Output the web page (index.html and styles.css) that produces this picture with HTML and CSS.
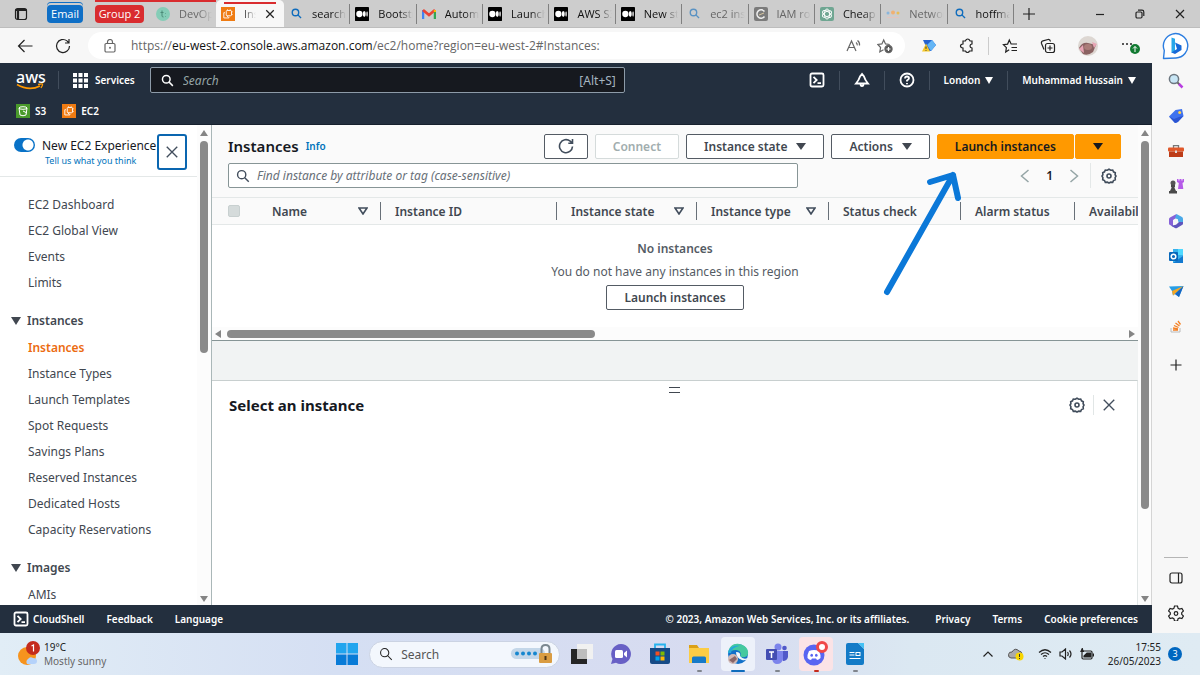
FILE: index.html
```html
<!DOCTYPE html>
<html lang="en">
<head>
    <meta charset="UTF-8">
    <meta name="viewport" content="width=device-width, initial-scale=1.0">
    <title>Instances | EC2 Management Console</title>
    <link rel="stylesheet" href="styles.css">
</head>
<body>
    <!-- Shared icons -->
    <svg class="sprite" aria-hidden="true">
        <symbol id="i-search" viewBox="0 0 16 16"><circle cx="6.5" cy="6.5" r="4.7"/><path d="M10 10l4.6 4.6"/></symbol>
        <symbol id="i-close" viewBox="0 0 16 16"><path d="M2 2l12 12M14 2L2 14"/></symbol>
        <symbol id="i-gear" viewBox="0 0 16 16"><path d="M8 1.2l1.700 1 2-.2.8 1.800 1.800.9-.2 2L15 8l-.9 1.700.2 2-1.800.8-.8 1.800-2-.2L8 15l-1.700-.9-2 .2-.8-1.800-1.800-.8.2-2L1 8l.9-1.300-.2-2 1.800-.9.8-1.800 2 .2z"/><circle cx="8" cy="8" r="2"/></symbol>
        <symbol id="i-shell" viewBox="0 0 16 16"><rect x="1.5" y="1.5" width="13" height="13" rx="1.5"/><path d="M4.5 4.800L7.700 8l-3.200 3.200M8.500 11.200H12"/></symbol>
        <symbol id="i-medium" viewBox="0 0 16 16"><rect width="16" height="16" rx="1" fill="#000"/><g fill="#fff"><circle cx="5" cy="8" r="3.600"/><ellipse cx="10.600" cy="8" rx="1.700" ry="3.400"/><ellipse cx="13.800" cy="8" rx=".8" ry="3.100"/></g></symbol>
        <symbol id="i-ec2" viewBox="0 0 16 16"><rect width="16" height="16" fill="#ef7b12"/><g fill="none" stroke="#fff"><rect x="6" y="4" width="6" height="6" rx="1"/><path d="M4.500 6.500H3.200v6H9v-1.400M7.500 4V2.700M10.500 4V2.700M12 5.500h1.300M12 8.500h1.300M7.500 10v1.500"/></g></symbol>
    </svg>

    <div class="tab-bar">
        <button class="icon-button tab-actions" aria-label="Tab actions"><svg class="line" width="14" height="14" viewBox="0 0 14 14"><rect x="1.500" y="1.500" width="11" height="11" rx="2"/><path d="M1.500 3h11M4 4v8.500" stroke-width="2.200"/></svg></button>
        <button class="group group-email">Email</button>
        <div class="red-group">
            <button class="group group-two">Group 2</button>
            <button class="tab muted"><svg width="14" height="14" viewBox="0 0 14 14"><circle cx="7" cy="7" r="7" fill="#85cdb7"/><path d="M6 3.500v5.500q0 1 1.500 1M4.500 5.500h3M9.500 6v.5M9.500 9.500v.5" stroke="#4b8b78" fill="none"/></svg><span>DevOps</span></button>
        </div>
        <button class="tab active"><svg width="14" height="14"><use href="#i-ec2"/></svg><span>Inst</span><svg class="line dark" width="10" height="10"><use href="#i-close"/></svg></button>
        <button class="tab"><svg class="line blue" width="11" height="11"><use href="#i-search"/></svg><span>search t</span></button>
        <button class="tab"><svg width="14" height="14"><use href="#i-medium"/></svg><span>Bootstr</span></button>
        <button class="tab"><svg width="14" height="12" viewBox="0 0 14 12"><path d="M1 11V2" stroke="#4285f4" stroke-width="2.500"/><path d="M13 11V2" stroke="#34a853" stroke-width="2.500"/><path d="M1 2l6 5 6-5" fill="none" stroke="#ea4335" stroke-width="2.800"/><path d="M13 4V2" stroke="#fbbc04" stroke-width="2.500"/></svg><span>Automa</span></button>
        <button class="tab"><svg width="14" height="14"><use href="#i-medium"/></svg><span>Launch</span></button>
        <button class="tab"><svg width="14" height="14"><use href="#i-medium"/></svg><span>AWS S3</span></button>
        <button class="tab"><svg width="14" height="14"><use href="#i-medium"/></svg><span>New sto</span></button>
        <button class="tab muted"><svg class="line blue faded" width="11" height="11"><use href="#i-search"/></svg><span>ec2 inst</span></button>
        <button class="tab muted"><svg width="14" height="14" viewBox="0 0 14 14"><rect width="14" height="14" rx="2" fill="#7b7b7b"/><path d="M10.500 4.500a4.200 4.200 0 1 0 0 5" fill="none" stroke="#eee" stroke-width="1.500"/><path d="M5 8l5-2" stroke="#d8c6a0"/></svg><span>IAM rol</span></button>
        <button class="tab"><svg width="14" height="14" viewBox="0 0 14 14"><rect width="14" height="14" rx="2" fill="#6fa692"/><g fill="none" stroke="#fff" stroke-width=".9"><ellipse cx="7" cy="7" rx="2.500" ry="5"/><ellipse cx="7" cy="7" rx="2.500" ry="5" transform="rotate(60 7 7)"/><ellipse cx="7" cy="7" rx="2.500" ry="5" transform="rotate(120 7 7)"/></g></svg><span>Cheap A</span></button>
        <button class="tab muted"><svg width="14" height="12" viewBox="0 0 14 12"><circle cx="2" cy="5" r="1.500" fill="#8ab6dd"/><circle cx="7" cy="4.500" r="2" fill="#f0b072"/><circle cx="12" cy="5" r="1.500" fill="#e9bd55"/><path d="M1 9.500h12" stroke="#e3c4bd"/></svg><span>Networ</span></button>
        <button class="tab"><svg class="line blue" width="11" height="11"><use href="#i-search"/></svg><span>hoffma</span></button>
        <button class="icon-button new-tab" aria-label="New tab"><svg class="line" width="14" height="14" viewBox="0 0 14 14"><path d="M7 1v12M1 7h12"/></svg></button>
        <div class="window-buttons">
            <button class="icon-button" aria-label="Minimise"><svg class="line" width="10" height="10" viewBox="0 0 10 10"><path d="M1 5.500h8"/></svg></button>
            <button class="icon-button" aria-label="Restore"><svg class="line" width="10" height="10" viewBox="0 0 10 10"><rect x="1" y="3" width="6" height="6" rx="1.200"/><path d="M3 1.200h4q1.800 0 1.800 1.800v4"/></svg></button>
            <button class="icon-button" aria-label="Close window"><svg class="line" width="10" height="10" viewBox="0 0 10 10"><path d="M1 1l8 8M9 1L1 9"/></svg></button>
        </div>
    </div>

    <div class="toolbar">
        <button class="icon-button" aria-label="Back"><svg class="line" width="16" height="14" viewBox="0 0 16 14"><path d="M15.500 7H1.500M7.500 1L1.500 7l6 6"/></svg></button>
        <button class="icon-button refresh" aria-label="Refresh"><svg class="line" width="16" height="16" viewBox="0 0 16 16"><path d="M14.500 8a6.500 6.500 0 1 1-2.500-5.100L14 5M14 1v4h-4"/></svg></button>
        <div class="address">
            <svg class="line grey" width="12" height="14" viewBox="0 0 12 14"><rect x="1" y="4.500" width="10" height="8.500" rx="1.200"/><path d="M3.500 4.500V3a2.500 2.500 0 0 1 5 0v1.500"/><circle cx="6" cy="8.700" r=".4"/></svg>
            <div class="url" role="textbox" aria-label="Address" contenteditable="true" spellcheck="false">https://<b>eu-west-2.console.aws.amazon.com</b>/ec2/home?region=eu-west-2#Instances:</div>
            <svg class="line grey" width="16" height="14" viewBox="0 0 16 14"><path d="M1 12L5.500 2 10 12M2.600 8.500h5.800M10 3.500q1.500 1 1.200 2.800M11.500 1.500q2.500 1.800 2 5"/></svg>
            <svg class="line grey" width="16" height="16" viewBox="0 0 16 16"><path d="M6.500 11.800l-3.700 2 .8-4.300L.8 6.500l4.100-.6L6.700 2l1.800 3.900 4.200.6"/><circle cx="11.500" cy="11" r="3.600" fill="#555"/><path d="M11.500 9v4M9.500 11h4" stroke="#fff"/></svg>
        </div>
        <div class="toolbar-icons">
            <svg width="16" height="14" viewBox="0 0 16 14"><path d="M2 1h9l4 5-5 6H7z" fill="#2463d1"/><path d="M6 6l5-5 4 5-5 6z" fill="#64b5f5"/><path d="M5 4.500L9 12.500H1z" fill="#f7c928"/><path d="M5 7.500v2.300M5 11v.7" stroke="#333"/></svg>
            <svg class="line" width="16" height="16" viewBox="0 0 16 16"><path d="M4 3h2.300q.9-2 2.400-2t2.400 2H13v3q-2 .3-2 2t2 2v3h-2.500q-.6 1.500-2 1.500T6.500 13H4v-3q-2.500-.2-2.500-2T4 6z"/></svg>
            <i class="divider"></i>
            <svg class="line" width="16" height="16" viewBox="0 0 16 16"><path d="M7.200 11.700L3.700 14l.7-4.300-3-3 4.200-.6L7.300 2l1.800 4H15M9.500 9.500H15M9.500 12.500H15"/></svg>
            <svg class="line" width="16" height="16" viewBox="0 0 16 16"><rect x="5.500" y="5.500" width="9" height="9" rx="2"/><path d="M4 11.500L1.500 5.500Q1 3.500 3 2.800L8 1.500q2-.4 2.500 2M10 7.500v5M7.500 10h5"/></svg>
            <svg width="20" height="20" viewBox="0 0 20 20"><circle cx="10" cy="10" r="10" fill="#ddd7d2"/><path d="M1 12q3-6 9-5l8 2-3 7q-5 4-10 2z" fill="#8a6262"/><path d="M1 13l4-4 1 8zM14 6l5 2-3 4z" fill="#e8a5b5"/><ellipse cx="10" cy="11" rx="4" ry="3" fill="#aa7c78"/></svg>
            <button class="icon-button" aria-label="Settings and more"><svg width="20" height="16" viewBox="0 0 20 16"><g fill="#222"><circle cx="3" cy="6" r="1"/><circle cx="7" cy="6" r="1"/><circle cx="11" cy="6" r="1"/></g><circle cx="15" cy="11" r="5" fill="#117a31"/><path d="M15 14V8.500M13 10.500l2-2 2 2" stroke="#fff" fill="none"/></svg></button>
            <svg width="28" height="28" viewBox="0 0 28 28"><path d="M1.500 26.500l.8-8A12.200 12.200 0 1 1 14 26z" fill="#fff" stroke="#2b7de0" stroke-width="1.400" stroke-linejoin="round"/><path d="M9.500 5.500l3.500 1.200v12.800L9.500 21z" fill="#28a8ea"/><path d="M13 10.500l6.500 3v4.500L13 22l-3.500-1.500 5.500-3.500z" fill="#1769d8"/></svg>
        </div>
    </div>

    <div class="workspace">
        <div class="console">
            <header class="aws-header">
                <div class="aws-top">
                    <a class="aws-logo" href="#" aria-label="aws home">
                        <span>aws</span>
                        <svg width="28" height="7" viewBox="0 0 28 7"><path d="M1 1.500q12 7 23 1.500" fill="none" stroke="#f90" stroke-width="1.600"/><path d="M22 1.500q4-1 4.500-.5T25 5" fill="none" stroke="#f90" stroke-width="1.300"/></svg>
                    </a>
                    <i class="divider"></i>
                    <button class="nav-button services"><svg width="15" height="15" viewBox="0 0 15 15" fill="#fff"><path d="M0 0h4v4H0zM5.500 0h4v4h-4zM11 0h4v4h-4zM0 5.500h4v4H0zM5.500 5.500h4v4h-4zM11 5.500h4v4h-4zM0 11h4v4H0zM5.500 11h4v4h-4zM11 11h4v4h-4z"/></svg>Services</button>
                    <label class="aws-search">
                        <svg class="line white" width="13" height="13"><use href="#i-search"/></svg>
                        <input type="search" placeholder="Search" aria-label="Search services">
                        <span>[Alt+S]</span>
                    </label>
                    <div class="aws-right">
                        <button class="nav-button" aria-label="CloudShell"><svg class="line white" width="16" height="16"><use href="#i-shell"/></svg></button>
                        <button class="nav-button" aria-label="Notifications"><svg class="line white" width="16" height="16" viewBox="0 0 16 16"><path d="M8 2L6 4.500Q5 8 2 11.500h12Q11 8 10 4.500zM6.500 12q0 2 1.500 2t1.500-2"/></svg></button>
                        <button class="nav-button" aria-label="Help"><svg class="line white" width="16" height="16" viewBox="0 0 16 16"><circle cx="8" cy="8" r="6.500"/><path d="M6 6.500q0-2 2-2t2 1.800q0 1-2 2.200V9.500M8 11v1.200"/></svg></button>
                        <button class="nav-button">London<i class="caret"></i></button>
                        <button class="nav-button account">Muhammad Hussain<i class="caret"></i></button>
                    </div>
                </div>
                <nav class="favourites">
                    <a href="#"><svg width="14" height="14" viewBox="0 0 14 14"><rect width="14" height="14" fill="#4a9a2c"/><g fill="none" stroke="#fff"><ellipse cx="7" cy="4" rx="4" ry="1.300"/><path d="M3 4l1 7q3 1.500 6 0l1-7M7 7l4 2"/></g></svg>S3</a>
                    <a href="#"><svg width="14" height="14"><use href="#i-ec2"/></svg>EC2</a>
                </nav>
            </header>

            <div class="console-body">
                <aside class="side-nav">
                    <div class="side-content">
                        <div class="experience">
                            <input type="checkbox" id="newExperience" checked>
                            <div>
                                <label for="newExperience">New EC2 Experience</label>
                                <a href="#">Tell us what you think</a>
                            </div>
                            <button aria-label="Close navigation"><svg class="line slate" width="14" height="14"><use href="#i-close"/></svg></button>
                        </div>
                        <nav class="links">
                            <ul>
                                <li><a href="#">EC2 Dashboard</a></li>
                                <li><a href="#">EC2 Global View</a></li>
                                <li><a href="#">Events</a></li>
                                <li><a href="#">Limits</a></li>
                            </ul>
                            <h3><i class="caret"></i>Instances</h3>
                            <ul>
                                <li><a class="current" href="#">Instances</a></li>
                                <li><a href="#">Instance Types</a></li>
                                <li><a href="#">Launch Templates</a></li>
                                <li><a href="#">Spot Requests</a></li>
                                <li><a href="#">Savings Plans</a></li>
                                <li><a href="#">Reserved Instances</a></li>
                                <li><a href="#">Dedicated Hosts</a></li>
                                <li><a href="#">Capacity Reservations</a></li>
                            </ul>
                            <h3><i class="caret"></i>Images</h3>
                            <ul>
                                <li><a href="#">AMIs</a></li>
                            </ul>
                        </nav>
                    </div>
                    <div class="scrollbar side-scroll"><i class="up"></i><i class="thumb"></i><i class="down"></i></div>
                </aside>

                <main class="content">
                    <section class="instances">
                        <div class="panel-head">
                            <div class="title-row">
                                <h1>Instances</h1>
                                <a href="#">Info</a>
                                <div class="actions">
                                    <button class="btn" aria-label="Refresh instances"><svg class="line slate" width="16" height="16" viewBox="0 0 16 16"><path d="M14.500 8.500a6.500 6.500 0 1 1-2.300-5.300L14.300 5M14.500 1v4.200h-4.200"/></svg></button>
                                    <button class="btn" disabled>Connect</button>
                                    <button class="btn">Instance state<i class="caret"></i></button>
                                    <button class="btn">Actions<i class="caret"></i></button>
                                    <div class="split">
                                        <button class="btn primary">Launch instances</button>
                                        <button class="btn primary" aria-label="More launch options"><i class="caret"></i></button>
                                    </div>
                                </div>
                            </div>
                            <div class="filter-row">
                                <label class="filter">
                                    <svg class="line slate" width="14" height="14"><use href="#i-search"/></svg>
                                    <input type="search" placeholder="Find instance by attribute or tag (case-sensitive)" aria-label="Find instance">
                                </label>
                                <div class="pager">
                                    <button class="icon-button" aria-label="Previous page"><svg class="line pale" width="10" height="14" viewBox="0 0 10 14"><path d="M8.500 1L1.500 7l7 6"/></svg></button>
                                    <span>1</span>
                                    <button class="icon-button" aria-label="Next page"><svg class="line pale" width="10" height="14" viewBox="0 0 10 14"><path d="M1.500 1l7 6-7 6"/></svg></button>
                                    <button class="icon-button preferences" aria-label="Preferences"><svg class="line slate" width="16" height="16"><use href="#i-gear"/></svg></button>
                                </div>
                            </div>
                        </div>
                        <table>
                            <colgroup><col class="c-check"><col class="c-name"><col class="c-id"><col class="c-state"><col class="c-type"><col class="c-status"><col class="c-alarm"><col class="c-zone"></colgroup>
                            <thead>
                                <tr>
                                    <th><input type="checkbox" aria-label="Select all instances" disabled></th>
                                    <th><div>Name<svg class="line slate" width="10" height="8" viewBox="0 0 10 8"><path d="M1 1h8L5 7z"/></svg></div></th>
                                    <th><div>Instance ID</div></th>
                                    <th><div>Instance state<svg class="line slate" width="10" height="8" viewBox="0 0 10 8"><path d="M1 1h8L5 7z"/></svg></div></th>
                                    <th><div>Instance type<svg class="line slate" width="10" height="8" viewBox="0 0 10 8"><path d="M1 1h8L5 7z"/></svg></div></th>
                                    <th><div>Status check</div></th>
                                    <th><div>Alarm status</div></th>
                                    <th><div>Availability Zone</div></th>
                                </tr>
                            </thead>
                        </table>
                        <div class="empty">
                            <strong>No instances</strong>
                            <p>You do not have any instances in this region</p>
                            <button class="btn">Launch instances</button>
                        </div>
                        <div class="scrollbar horizontal"><i class="left"></i><i class="thumb"></i><i class="right"></i></div>
                    </section>
                    <section class="details">
                        <button class="grip" aria-label="Resize panel"></button>
                        <div class="details-head">
                            <h2>Select an instance</h2>
                            <button class="icon-button" aria-label="Panel preferences"><svg class="line slate" width="16" height="16"><use href="#i-gear"/></svg></button>
                            <button class="icon-button close" aria-label="Close panel"><svg class="line slate" width="14" height="14"><use href="#i-close"/></svg></button>
                        </div>
                    </section>
                    <!-- Pointer to the launch button -->
                    <svg class="pointer" width="80" height="128" viewBox="0 0 80 128"><path d="M5 122L71 5M48 12L71 5l5 23" fill="none" stroke="#0b78d8" stroke-width="6" stroke-linecap="round" stroke-linejoin="round"/></svg>
                </main>
                <div class="scrollbar page-scroll"><i class="up"></i><i class="thumb"></i><i class="down"></i></div>
            </div>

            <footer class="aws-footer">
                <button class="nav-button"><svg class="line white" width="16" height="16"><use href="#i-shell"/></svg>CloudShell</button>
                <a href="#">Feedback</a>
                <a href="#">Language</a>
                <span class="copyright">© 2023, Amazon Web Services, Inc. or its affiliates.</span>
                <a href="#">Privacy</a>
                <a href="#">Terms</a>
                <a href="#">Cookie preferences</a>
            </footer>
        </div>

        <aside class="edge-bar">
            <button class="icon-button" aria-label="Search"><svg width="16" height="16" viewBox="0 0 16 16"><circle cx="6" cy="6" r="4.600" fill="#c8e6f5" stroke="#6d7780" stroke-width="1.500"/><path d="M9.500 9.500l2 2" stroke="#666" stroke-width="2"/><path d="M11 11l3.500 3.500" stroke="#b83ee0" stroke-width="2.500"/></svg></button>
            <button class="icon-button" aria-label="Shopping"><svg width="16" height="16" viewBox="0 0 16 16"><path d="M1 8.500L7.500 2l6.500-1 1.500 7-6.500 6.500-2 .5z" fill="#3f72ee"/><path d="M1 8.500L7 15l3-1 5.500-6L11 9l-5 2z" fill="#2b54d2"/><circle cx="11.700" cy="4.500" r="1.500" fill="#ffd24a"/></svg></button>
            <button class="icon-button" aria-label="Tools"><svg width="16" height="16" viewBox="0 0 16 16"><path d="M5.500 5V2.700h5V5" fill="none" stroke="#777" stroke-width="1.300"/><rect x="0" y="4.500" width="16" height="4" rx="1" fill="#e0582a"/><path d="M1 8.500h14V14H1z" fill="#bd3c18"/><path d="M7 7.500h2V10H7z" fill="#ddd"/></svg></button>
            <button class="icon-button" aria-label="Games"><svg width="16" height="16" viewBox="0 0 16 16"><path d="M9 1h1.500v1.500h1V1h2v1.500h1V1H16v3l-1.500 1 .8 6H10l.8-6L9 4z" fill="#b55be8"/><circle cx="5" cy="5" r="2.500" fill="#555"/><path d="M3 7h4v2l-.7.5L8 13h1v2.500H1V13h1l1.700-3.500L3 9z" fill="#4a4a4a"/></svg></button>
            <button class="icon-button" aria-label="Microsoft 365"><svg width="16" height="16" viewBox="0 0 16 16"><path d="M8.500 1L2 4.500Q1 5 1 6v4.500q0 1 1 1.500l3 1.500V7l4-2.500z" fill="#8662d8"/><path d="M8.500 1l5.500 3q1 .6 1 2v4l-5-1V6.500L7 5z" fill="#4aa9e8"/><path d="M15 9v1.500q0 1-1 1.500l-5 3q-1 .5-2 0l-4-2.300 5-1L11 9z" fill="#5f55bd"/><circle cx="8" cy="8.200" r="2.300" fill="#f7f7f7"/></svg></button>
            <button class="icon-button" aria-label="Outlook"><svg width="16" height="16" viewBox="0 0 16 16"><path d="M5 1h10v14H5z" fill="#37b2ed"/><path d="M10 1h5v6h-5z" fill="#50d9ff"/><path d="M5 15l10-7v7z" fill="#1379cf"/><rect x="1" y="4" width="9" height="9" rx="1" fill="#0868bb"/><circle cx="5.500" cy="8.500" r="2.300" fill="none" stroke="#fff" stroke-width="1.500"/></svg></button>
            <button class="icon-button" aria-label="Drop"><svg width="16" height="16" viewBox="0 0 16 16"><path d="M1 3.500L15.500 3 11 14l-4-3-2 1.500L4 8z" fill="#279de5"/><path d="M15.500 3L4 8l1 4.500z" fill="#f5a623"/><path d="M15.500 3L11 14l-4-3z" fill="#1765c1"/></svg></button>
            <button class="icon-button" aria-label="Stack Overflow"><svg width="14" height="14" viewBox="0 0 14 14" fill="none"><path d="M2 9v4h9V9" stroke="#bcbcbc"/><path d="M4 11h5M4 9l5 .8M5 6.500l4.500 2M6.500 4l4 3M9 2l2.500 3.500" stroke="#f48024" stroke-width="1.300"/></svg></button>
            <button class="icon-button customise" aria-label="Customise"><svg class="line" width="12" height="12" viewBox="0 0 12 12"><path d="M6 .5v11M.5 6h11"/></svg></button>
            <div class="edge-bottom">
                <button class="icon-button" aria-label="Hide sidebar"><svg class="line" width="14" height="12" viewBox="0 0 14 12"><rect x="1" y="1" width="12" height="10" rx="2"/><path d="M9.500 1v10"/></svg></button>
                <button class="icon-button" aria-label="Sidebar settings"><svg class="line" width="16" height="16" viewBox="0 0 16 16"><path d="M6.500 1h3l.6 2.300 1.500.8 2.300-.7 1.500 2.600-1.700 1.700v1.600l1.700 1.700-1.500 2.600-2.300-.7-1.500.8L9.500 16h-3l-.6-2.300-1.500-.8-2.300.7L.6 11l1.700-1.700V7.700L.6 6l1.500-2.600 2.300.7 1.500-.8z"/><circle cx="8" cy="8.500" r="1.800"/></svg></button>
            </div>
        </aside>
    </div>

    <div class="taskbar">
        <button class="weather">
            <svg width="24" height="26" viewBox="0 0 24 26"><circle cx="9" cy="15" r="9" fill="#f6931e"/><path d="M9 23a4 4 0 0 1 1-5q2-3 5-1 4 0 4 3t-3 3z" fill="#b5d2fa"/><circle cx="15" cy="7" r="7" fill="#c42b1c"/><path d="M13.500 5l2-1v6.500" fill="none" stroke="#fff" stroke-width="1.200"/></svg>
            <span>19°C<small>Mostly sunny</small></span>
        </button>
        <div class="task-apps">
            <button class="app" aria-label="Start"><svg width="22" height="22" viewBox="0 0 22 22"><path d="M0 0h10.500v10.500H0zM11.500 0H22v10.500H11.500z" fill="#22a5ee"/><path d="M0 11.500h10.500V22H0zM11.500 11.500H22V22H11.500z" fill="#087bd7"/></svg></button>
            <label class="task-search">
                <svg class="line" width="14" height="14"><use href="#i-search"/></svg>
                <input type="search" placeholder="Search" aria-label="Search Windows">
                <svg width="44" height="22" viewBox="0 0 44 22"><rect x="1" y="5" width="34" height="11" rx="5.500" fill="#c4d7e9"/><g fill="#1687cf"><circle cx="7" cy="10.500" r="2"/><circle cx="13" cy="10.500" r="2"/><circle cx="19" cy="10.500" r="2"/><circle cx="25" cy="10.500" r="2"/></g><path d="M31.500 11V6q0-4 4-4t4 4v5" fill="none" stroke="#7c8890" stroke-width="2"/><rect x="29" y="10" width="13" height="10" rx="1" fill="#d99c42"/><path d="M35.500 13v4" stroke="#4c3518" stroke-width="2"/></svg>
            </label>
            <button class="app" aria-label="Task view"><svg width="22" height="22" viewBox="0 0 22 22"><rect x="0" y="6" width="16" height="15" fill="#252525"/><rect x="6" y="1" width="16" height="15" fill="#f1f1f1"/><path d="M6 6h10v10H6z" fill="#bdbdbd"/></svg></button>
            <button class="app" aria-label="Chat"><svg width="22" height="22" viewBox="0 0 22 22"><path d="M11 1a10 10 0 1 1-5 18.700L1 21l1.500-5A10 10 0 0 1 11 1z" fill="#6860c5"/><rect x="5" y="7" width="8" height="8" rx="1.500" fill="#fff"/><path d="M14 10l3-2.500v7L14 12z" fill="#fff"/></svg></button>
            <button class="app" aria-label="Microsoft Store"><svg width="22" height="22" viewBox="0 0 22 22"><path d="M6 5V1.500h10V5" fill="none" stroke="#27b3ee" stroke-width="1.800"/><path d="M1 5h20v14q0 2-2 2H3q-2 0-2-2z" fill="#164a86"/><path d="M6.500 8.500h4v4h-4z" fill="#f25022"/><path d="M11.500 8.500h4v4h-4z" fill="#7fba00"/><path d="M6.500 13.500h4v4h-4z" fill="#00a4ef"/><path d="M11.500 13.500h4v4h-4z" fill="#ffb900"/></svg></button>
            <button class="app open" aria-label="File Explorer"><svg width="22" height="22" viewBox="0 0 22 22"><path d="M1 2h8l2 3h10v15H1z" fill="#dba018"/><path d="M1 5h20v15H1z" fill="#fbcc45"/><path d="M4 20v-5q0-1.500 1.500-1.500h11q1.500 0 1.500 1.500v5z" fill="#1679c8"/></svg></button>
            <button class="app open current" aria-label="Edge"><svg width="22" height="22" viewBox="0 0 22 22"><circle cx="11" cy="11" r="10" fill="#1270c9"/><path d="M1 10C2 3 7 0 12 1c6 1 10 5 9 10-1 4-6 4-8 2 2-2 0-6-4-6-4 0-7 2-8 3z" fill="#45c99f"/><path d="M1 10c1-6 7-9 13-7-5 0-9 2-10 7z" fill="#23a7dc"/><path d="M9 9q5 0 4 4 3 4 8 2-2 3-6 2-6-2-6-8z" fill="#f2f8fc"/><circle cx="6" cy="16" r="5" fill="#cfb7b4"/><path d="M2 17l6-4 2 3-4 4z" fill="#886669"/></svg></button>
            <button class="app open" aria-label="Teams"><svg width="22" height="22" viewBox="0 0 22 22"><circle cx="12" cy="4" r="3.500" fill="#7b83eb"/><circle cx="18.500" cy="5" r="2.300" fill="#5059c9"/><path d="M14 8h8v6q-1 4-5 4z" fill="#5059c9"/><path d="M7 8h10v8q-1 5-6 5-4 0-5-5z" fill="#7b83eb"/><rect x="0" y="6" width="11" height="11" rx="1" fill="#444eb2"/><path d="M3 9h5M5.500 9v6" stroke="#fff" stroke-width="1.500"/></svg></button>
            <button class="app open alert" aria-label="Discord"><svg width="26" height="26" viewBox="0 0 26 26"><circle cx="11" cy="14" r="10.500" fill="#5865f2"/><path d="M6 10q5-2 10 0 2 4 1.500 7-2 2-3.500 2l-1-1.500H9L8 19q-2 0-3.500-2Q4 14 6 10z" fill="#fff"/><ellipse cx="8.700" cy="14.300" rx="1.300" ry="1.500" fill="#5865f2"/><ellipse cx="13.300" cy="14.300" rx="1.300" ry="1.500" fill="#5865f2"/><circle cx="19" cy="6" r="4.500" fill="#fff" stroke="#f04747" stroke-width="3"/></svg></button>
            <button class="app open" aria-label="Writer"><svg width="18" height="22" viewBox="0 0 18 22"><path d="M0 2q0-2 2-2h10l6 6v14q0 2-2 2H2q-2 0-2-2z" fill="#137bc7"/><path d="M12 0h6v6z" fill="#45c1f4"/><path d="M3.500 9.500h5M3.500 12h5M3.500 15.500h11" stroke="#fff" stroke-width="1.200"/><rect x="10" y="9.500" width="4" height="3" fill="none" stroke="#fff"/></svg></button>
        </div>
        <div class="tray">
            <svg class="line" width="12" height="8" viewBox="0 0 12 8"><path d="M1.500 6.500L6 2l4.500 4.500"/></svg>
            <svg width="16" height="14" viewBox="0 0 16 14"><path d="M3 11a3 3 0 0 1 1-6q3-5 7-1 3 0 3 4l-4 3z" fill="#aaa" stroke="#555"/><circle cx="11.500" cy="9.500" r="4" fill="#f8d600"/><path d="M11.500 7v3M11.500 11v1" stroke="#333"/></svg>
            <div class="status">
                <svg class="line" width="14" height="12" viewBox="0 0 14 12"><path d="M1 4.500q6-5.500 12 0M3 6.500q4-3.500 8 0M5 8.500q2-1.700 4 0M6.500 10.500h1"/></svg>
                <svg class="line" width="14" height="12" viewBox="0 0 14 12"><path d="M1 4v4h2l3.500 3V1L3 4zM8.500 4q1.500 2 0 4M10.500 2.500q3 3.500 0 7"/></svg>
                <svg class="line" width="14" height="12" viewBox="0 0 14 12"><rect x="2" y="3" width="10" height="8" rx="1.200"/><path d="M13.500 5.500v3" stroke-width="1.600"/><path d="M2.500 0L1 3.500h3M7 5h3.500v4H4V8z" fill="#222"/></svg>
            </div>
            <div class="clock">17:55<br>26/05/2023</div>
            <span class="badge">3</span>
        </div>
    </div>
</body>
</html>
```
FILE: styles.css
```css
* {
    box-sizing: border-box;
}

body {
    margin: 0;
    height: 100vh;
    display: flex;
    flex-direction: column;
    overflow: hidden;
    font-family: "Noto Sans", "Open Sans", sans-serif;
    font-size: 12px;
    color: #414750;
    background: #fff;
}

button, input {
    font: inherit;
    color: inherit;
    margin: 0;
}

button {
    border: none;
    background: none;
    padding: 0;
    cursor: pointer;
}

input {
    border: none;
    outline: none;
    background: none;
    padding: 0;
    min-width: 0;
}

a {
    color: inherit;
    text-decoration: none;
}

h1, h2, h3, p, ul {
    margin: 0;
    padding: 0;
}

ul {
    list-style: none;
}

svg {
    display: block;
    flex: none;
}

.sprite {
    position: absolute;
    width: 0;
    height: 0;
}

.line {
    fill: none;
    stroke: #222;
    stroke-width: 1.2;
}

.line.grey { stroke: #666; }
.line.dark { stroke-width: 2; }
.line.blue { stroke: #0f6cbd; stroke-width: 2; }
.line.faded { opacity: 0.6; }
.line.white { stroke: #fff; stroke-width: 1.8; }
.line.slate { stroke: #414d5c; stroke-width: 1.6; }
.line.pale { stroke: #95a5a6; stroke-width: 1.5; }

.icon-button {
    display: flex;
    align-items: center;
    justify-content: center;
}

.divider {
    width: 1px;
    height: 18px;
    background: #ccc;
}

.caret {
    border: 4px solid transparent;
    border-top: 7px solid currentColor;
    border-bottom: 0;
}

/* Browser tabs */
.tab-bar {
    flex: none;
    display: flex;
    height: 28px;
    background: #cdcdcd;
    border-bottom: 1px solid #bdbdbd;
    color: #111;
    font-family: "Open Sans", sans-serif;
    font-size: 11px;
}

.tab-actions {
    width: 42px;
    margin-right: 5px;
}

.group {
    height: 18px;
    margin-top: 5px;
    padding: 0;
    border-radius: 4px;
    color: #fff;
    line-height: 18px;
}

.group-email {
    width: 36px;
    margin-right: 12px;
    background: #0f6fc6;
    box-shadow: 0 -2px #cdcdcd, 0 -3px #0f6fc6;
}

.red-group {
    display: flex;
    width: 121px;
    border-top: 2px solid transparent;
    background: linear-gradient(#d92c2f, #d92c2f) 0 0 / 100% 2px no-repeat border-box;
}

.group-two {
    flex: none;
    width: 49px;
    margin-top: 3px;
    background: #d92c2f;
}

.tab {
    display: flex;
    align-items: center;
    flex: 1 1 66px;
    min-width: 0;
    padding: 0 3px 0 5px;
    gap: 9px;
    border: solid #808080;
    border-image: linear-gradient(transparent 5px, #808080 5px, #808080 23px, transparent 23px) 1;
    border-width: 0 1px 0 0;
}

.tab span {
    flex: 1;
    min-width: 0;
    overflow: hidden;
    white-space: nowrap;
    text-align: left;
    mask-image: linear-gradient(to left, transparent, #000 14px);
}

.tab .blue {
    margin-left: 2px;
    margin-right: 1px;
}

.tab.muted {
    color: #666;
}

.red-group .tab {
    flex: 1;
    border: none;
    padding-left: 12px;
    padding-right: 4px;
    padding-bottom: 2px;
}

.tab.active {
    flex: 0 0 68px;
    border: none;
    padding-right: 9px;
    border-radius: 5px 5px 0 0;
    background: linear-gradient(#d92c2f, #d92c2f) 8px 2px / 52px 2px no-repeat #f7f7f7;
}

.new-tab {
    width: 30px;
}

.window-buttons {
    display: flex;
    margin-left: 36px;
}

.window-buttons button {
    width: 40px;
}

/* Address bar */
.toolbar {
    flex: none;
    display: flex;
    align-items: center;
    height: 35px;
    padding: 0 10px 0 17px;
    background: #f7f7f7;
}

.refresh {
    margin: 0 17px 0 22px;
}

.address {
    flex: 1;
    display: flex;
    align-items: center;
    height: 27px;
    padding: 0 12px 0 16px;
    gap: 15px;
    border-radius: 14px;
    background: #fff;
}

.url {
    flex: 1;
    font-family: "Open Sans", sans-serif;
    font-size: 12px;
    color: #666;
    outline: none;
    white-space: nowrap;
}

.url b {
    font-weight: 400;
    color: #111;
}

.toolbar-icons {
    display: flex;
    align-items: center;
    gap: 22px;
    margin-left: 16px;
}

.toolbar-icons .divider {
    margin: 0 -9px;
}

/* Page beside the browser sidebar */
.workspace {
    flex: 1;
    display: flex;
    min-height: 0;
}

.console {
    flex: 1;
    min-width: 0;
    display: flex;
    flex-direction: column;
}

.aws-header {
    flex: none;
    padding: 4px 16px 6px;
    color: #fff;
    background: #232f3e;
    font-weight: 600;
    font-size: 10px;
    border-bottom: 1px solid #16202d;
}

.aws-top {
    display: flex;
    align-items: center;
    height: 26px;
}

.aws-top > .divider {
    background: #414d5c;
    margin: 0 14px;
}

.aws-logo {
    width: 28px;
    font-size: 16px;
    font-weight: 500;
    line-height: 12px;
}

.nav-button {
    display: flex;
    align-items: center;
    gap: 7px;
    font-weight: 600;
}

.services {
    margin-right: 15px;
}

.aws-search {
    flex: 0 1 475px;
    display: flex;
    align-items: center;
    height: 26px;
    padding: 0 8px 0 10px;
    gap: 9px;
    border: 1px solid #8d9ba8;
    border-radius: 2px;
    background: #16191f;
    color: #a5b5c0;
    font-size: 12px;
    font-weight: 400;
}

.aws-search input {
    flex: 1;
}

.aws-search input::placeholder {
    color: #95a5a6;
    font-style: italic;
}

.aws-right {
    display: flex;
    margin-left: auto;
}

.aws-right button {
    height: 19px;
    padding: 0 14px;
    gap: 5px;
    border-right: 1px solid #414d5c;
}

.aws-right .account {
    padding-right: 0;
    border: none;
}

.favourites {
    display: flex;
    gap: 16px;
    height: 25px;
    align-items: end;
}

.favourites a {
    display: flex;
    align-items: center;
    gap: 5px;
}

.console-body {
    flex: 1;
    display: flex;
    min-height: 0;
}

.side-nav {
    flex: none;
    display: flex;
    width: 212px;
    border-right: 1px solid #aab7b8;
}

.side-content {
    flex: 1;
    overflow: hidden;
}

.experience {
    display: flex;
    height: 52px;
    padding: 9px 10px 0 14px;
    border-bottom: 1px solid #e4e8e8;
}

.experience input {
    appearance: none;
    flex: none;
    width: 21px;
    height: 14px;
    margin: 4px 7px 0 0;
    border-radius: 7px;
    background: radial-gradient(circle at 14px 7px, #fff 5px, #0972c7 6px);
}

.experience div {
    flex: 1;
    white-space: nowrap;
    color: #16191f;
}

.experience label {
    display: block;
    line-height: 18px;
    margin-top: 3px;
}

.experience a {
    display: block;
    margin-left: 3px;
    font-size: 9px;
    line-height: 12px;
    color: #0073bb;
}

.experience button {
    flex: none;
    display: flex;
    align-items: center;
    justify-content: center;
    width: 30px;
    height: 36px;
    border: 2px solid #0a66b0;
    border-radius: 3px;
}

.links {
    padding-top: 15px;
}

.links li, .links h3 {
    line-height: 26px;
}

.links li {
    padding-left: 28px;
}

.links h3 {
    display: flex;
    align-items: center;
    gap: 6px;
    margin: 12px 0 1px;
    padding-left: 11px;
    font-size: 12px;
    font-weight: 600;
}

.links h3 .caret {
    border-width: 8px 5px 0;
}

.links .current {
    color: #ec6b10;
    font-weight: 600;
}

/* Scroll bars */
.scrollbar {
    flex: none;
    display: flex;
    flex-direction: column;
    align-items: center;
    width: 14px;
    padding: 5px 0 3px;
    background: #fcfcfc;
}

.scrollbar .thumb {
    width: 8px;
    margin-top: 5px;
    border-radius: 4px;
    background: #8a8a8a;
}

.scrollbar .up, .scrollbar .down {
    border: 4px solid transparent;
}

.scrollbar .up {
    border-top: 0;
    border-bottom: 6px solid #858585;
}

.scrollbar .down {
    margin-top: auto;
    border-bottom: 0;
    border-top: 6px solid #858585;
}

.side-scroll .thumb {
    height: 45%;
}

.page-scroll {
    border-right: 1px solid #d5d5d5;
}

.page-scroll .thumb {
    height: 78%;
}

.scrollbar.horizontal {
    flex-direction: row;
    width: auto;
    height: 13px;
    padding: 0 3px;
}

.horizontal .thumb {
    width: 40%;
    height: 8px;
    margin: 0 0 0 6px;
}

.horizontal .left, .horizontal .right {
    border: 4px solid transparent;
}

.horizontal .left {
    border-left: 0;
    border-right: 6px solid #858585;
}

.horizontal .right {
    margin-left: auto;
    border-right: 0;
    border-left: 6px solid #858585;
}

/* Instances panel */
.content {
    position: relative;
    flex: 1;
    min-width: 0;
    display: flex;
    flex-direction: column;
    background: #f1f3f3;
}

.instances {
    overflow: hidden;
    background: #fff;
    border-bottom: 1px solid #879596;
}

.panel-head {
    padding: 8px 17px 9px 16px;
    background: #fafafa;
}

.title-row, .actions, .filter-row, .pager {
    display: flex;
    align-items: center;
}

.title-row {
    height: 26px;
    margin-bottom: 4px;
}

h1, h2 {
    color: #16191f;
    font-size: 15px;
    line-height: 20px;
    font-weight: 600;
}

.title-row > a {
    margin-left: 7px;
    font-size: 10px;
    font-weight: 600;
    color: #0073bb;
}

.actions {
    gap: 7px;
    margin-left: auto;
}

.btn {
    display: flex;
    align-items: center;
    justify-content: center;
    gap: 9px;
    height: 25px;
    padding: 0 17px;
    border: 1px solid #545b64;
    border-radius: 2px;
    background: #fff;
    font-weight: 600;
    white-space: nowrap;
}

.btn .caret {
    border-width: 7px 5px 0;
}

.btn:first-child:not(.primary) {
    padding: 0 13px;
}

.btn:disabled {
    border-color: #d5dbdb;
    color: #a1adae;
}

.btn.primary {
    border-color: #ff9900;
    background: #ff9900;
    color: #16191f;
}

.split {
    display: flex;
    gap: 1px;
}

.filter {
    flex: 0 1 570px;
    display: flex;
    align-items: center;
    gap: 7px;
    height: 25px;
    padding: 0 7px;
    border: 1px solid #879596;
    border-radius: 2px;
    background: #fff;
}

.filter input {
    flex: 1;
}

.filter input::placeholder {
    color: #687078;
    font-style: italic;
}

.pager {
    margin-left: auto;
    color: #16191f;
    font-weight: 600;
    gap: 16px;
}

.preferences {
    height: 25px;
    padding: 0 4px 0 10px;
    margin-left: -5px;
    border-left: 1px solid #e4e8e8;
}

table {
    table-layout: fixed;
    width: 1038px;
    border-collapse: collapse;
    background: #fafafa;
    border-top: 1px solid #e4e8e8;
    border-bottom: 1px solid #e4e8e8;
}

.c-check { width: 46px; }
.c-name { width: 123px; }
.c-id { width: 176px; }
.c-state { width: 140px; }
.c-type { width: 132px; }
.c-status { width: 132px; }
.c-alarm { width: 114px; }

th {
    height: 27px;
    padding: 0;
    text-align: left;
    font-weight: 600;
}

th div {
    display: flex;
    align-items: center;
    justify-content: space-between;
    height: 18px;
    padding: 0 12px 0 14px;
    border-right: 1px solid #687078;
    white-space: nowrap;
}

th input {
    appearance: none;
    display: block;
    width: 12px;
    height: 12px;
    margin-left: 16px;
    border: 1px solid #c8d0d0;
    border-radius: 2px;
    background: #d5dbdb;
}

.empty {
    display: flex;
    flex-direction: column;
    align-items: center;
    height: 102px;
    padding-top: 15px;
    line-height: 18px;
    color: #545b64;
}

.empty strong {
    font-weight: 600;
}

.empty p {
    margin: 5px 0 4px;
}

.empty .btn {
    color: #414750;
}

/* Details panel */
.details {
    flex: 1;
    display: flex;
    flex-direction: column;
    margin-top: 39px;
    background: #fff;
    border-top: 1px solid #c8cfcf;
    border-right: 1px solid #e1e6e6;
}

.grip {
    align-self: center;
    width: 11px;
    height: 6px;
    margin-top: 6px;
    border: solid #414750;
    border-width: 1px 0;
}

.details-head {
    display: flex;
    align-items: center;
    height: 24px;
    padding: 0 21px 0 17px;
}

.details-head h2 {
    margin-right: auto;
    font-weight: 700;
}

.details-head .close {
    height: 20px;
    margin-left: 8px;
    padding-left: 8px;
    border-left: 1px solid #e1e6e6;
}

.pointer {
    position: absolute;
    right: 176px;
    top: 45px;
}

.aws-footer {
    flex: none;
    display: flex;
    align-items: center;
    gap: 22px;
    height: 28px;
    padding: 0 14px 0 13px;
    color: #fff;
    background: #232f3e;
    font-size: 10px;
    font-weight: 600;
    white-space: nowrap;
}

.aws-footer .nav-button {
    gap: 4px;
}

.copyright {
    margin-left: auto;
    margin-right: 4px;
}

/* Edge sidebar */
.edge-bar {
    flex: none;
    display: flex;
    flex-direction: column;
    align-items: center;
    gap: 19px;
    width: 48px;
    padding-top: 10px;
    background: #f7f7f7;
}

.edge-bar .icon-button {
    width: 24px;
    height: 16px;
}

.edge-bar .customise {
    margin-top: 4px;
}

.edge-bottom {
    display: flex;
    flex-direction: column;
    gap: 19px;
    margin-top: auto;
    padding: 12px 0;
    border-top: 1px solid #b5b5b5;
}

/* Taskbar */
.taskbar {
    flex: none;
    display: flex;
    align-items: center;
    justify-content: space-between;
    height: 42px;
    padding: 0 18px;
    color: #222;
    font-size: 10px;
    background: linear-gradient(90deg, #e1edf6, #d5dff3 28%, #d7dbf0 60%, #dbe8f2 76%, #dfebf3);
}

.weather {
    display: flex;
    align-items: center;
    gap: 2px;
    line-height: 14px;
    text-align: left;
}

.weather small {
    display: block;
    font-size: 10px;
    color: #666;
}

.task-apps {
    display: flex;
    align-items: center;
    gap: 5px;
    margin-left: 224px;
    margin-right: auto;
}

.app {
    position: relative;
    display: flex;
    align-items: center;
    justify-content: center;
    width: 34px;
    height: 34px;
    border-radius: 4px;
}

.app.current {
    background: #edf1fa;
}

.app.alert {
    background: #fbe3e6;
}

.app.open::after {
    content: "";
    position: absolute;
    bottom: -1px;
    width: 5px;
    height: 2px;
    border-radius: 1px;
    background: #80858d;
}

.app.current::after {
    width: 14px;
    background: #0f6cbd;
}

.app.alert::after {
    background: #c42b1c;
}

.task-search {
    display: flex;
    align-items: center;
    gap: 8px;
    width: 191px;
    height: 27px;
    padding: 0 5px 0 9px;
    border: 1px solid #cbd3e3;
    border-radius: 14px;
    background: #f3f7fd;
    font-size: 12px;
}

.task-search input {
    flex: 1;
}

.task-search input::placeholder {
    color: #555;
}

.tray, .status {
    display: flex;
    align-items: center;
}

.tray {
    gap: 14px;
}

.status {
    gap: 7px;
}

.clock {
    line-height: 14px;
    text-align: right;
}

.badge {
    width: 14px;
    height: 14px;
    margin-left: -7px;
    border-radius: 50%;
    background: #0067c0;
    color: #fff;
    font-size: 9px;
    line-height: 14px;
    text-align: center;
}
```
